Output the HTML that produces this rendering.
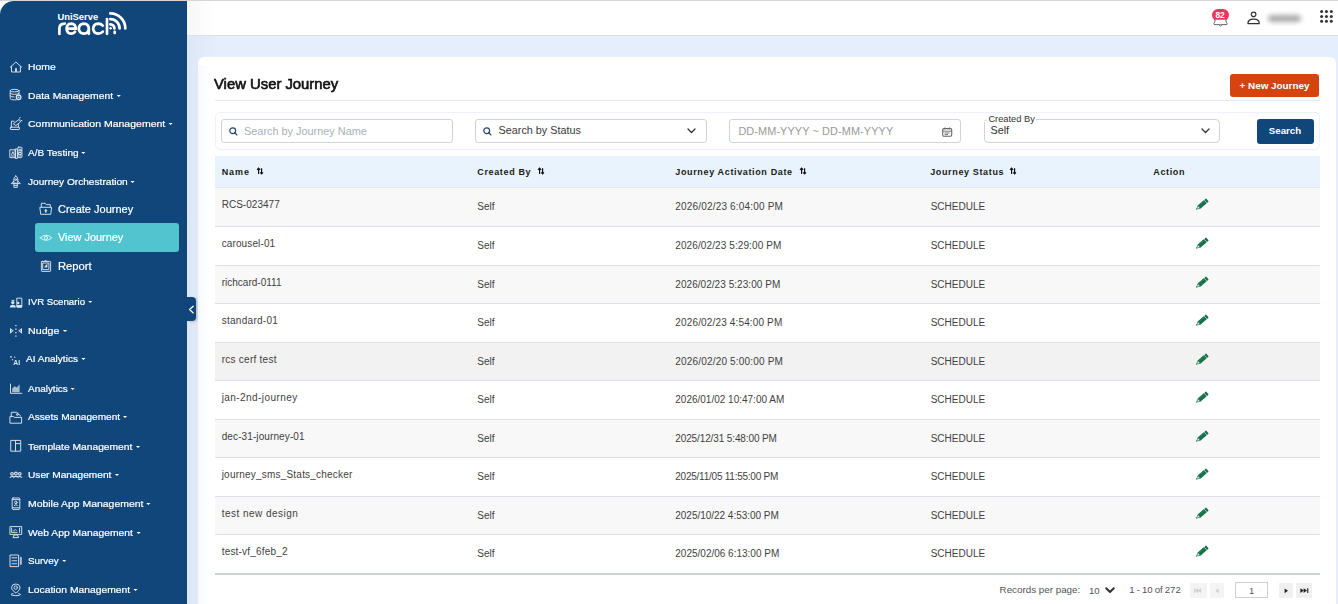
<!DOCTYPE html>
<html><head><meta charset="utf-8">
<style>
*{box-sizing:border-box;margin:0;padding:0}
html,body{width:1338px;height:604px;overflow:hidden;background:#fff;font-family:"Liberation Sans",sans-serif}
.t{position:absolute;white-space:nowrap}
svg.t{overflow:visible}
.cr{display:inline-block;width:0;height:0;border-left:2px solid transparent;border-right:2px solid transparent;border-top:2px solid #fff;margin-left:3px;vertical-align:2px}
</style></head><body>
<div class="t" style="left:0px;top:0px;width:1338px;height:604px;background:#fff;"></div>
<div class="t" style="left:187px;top:36px;width:1151px;height:568px;background:#e4eefc;"></div>
<div class="t" style="left:187px;top:35px;width:1151px;height:1px;background:#dcdfe4;"></div>
<div class="t" style="left:0px;top:0px;width:1338px;height:1px;background:#d6d6d6;"></div>
<div class="t" style="left:187px;top:1px;width:26px;height:34px;background:linear-gradient(90deg,rgba(0,0,0,0.035),rgba(0,0,0,0));"></div>
<div class="t" style="left:187px;top:36px;width:28px;height:568px;background:linear-gradient(90deg,rgba(0,0,40,0.03),rgba(0,0,0,0));"></div>
<div class="t" style="left:0px;top:1px;width:187px;height:603px;background:#11467b;border-top-left-radius:14px"></div>
<div class="t" style="left:57.5px;top:12.04px;font-size:9.4px;line-height:9.4px;font-weight:700;color:#fff;">UniServe</div>
<svg class="t" style="left:0px;top:0px;" width="187" height="40" viewBox="0 0 187 40"><g stroke="#fff" stroke-width="2.7" fill="none" stroke-linecap="round">
<path d="M59.4 34 V28.5 Q59.4 23.6 64.8 23.6"/>
<path d="M75 31.8 Q73.4 33.6 71 33.6 Q66.8 33.4 66.6 28.6 Q66.8 23.8 71.2 23.6 Q75.6 23.8 75.8 28.6 H67"/>
<path d="M88.8 28.6 Q88.6 23.8 84 23.6 Q79 23.8 78.8 28.6 Q79 33.4 84 33.6 Q88.6 33.4 88.8 28.6 V33.8"/>
<path d="M102.8 25.6 Q101 23.6 98.2 23.6 Q93.4 23.8 93.2 28.6 Q93.4 33.4 98.2 33.6 Q101 33.6 102.8 31.6"/>
<path d="M107 19 V33.8"/>
<path d="M110.3 24.3 A4.1 4.1 0 0 1 114.4 28.4"/>
<path d="M110.3 19.1 A9.3 9.3 0 0 1 119.6 28.4"/>
<path d="M110.3 13.4 A15 15 0 0 1 125.3 28.4"/>
</g>
<rect x="113.4" y="30.6" width="2.6" height="3.6" rx="1" fill="#fff"/>
<circle cx="110.6" cy="28.2" r="1.2" fill="#fff"/></svg>
<div class="t" style="left:35px;top:223px;width:144px;height:29px;background:#52c4d0;border-radius:3px"></div>
<svg class="t" style="left:6px;top:56px;opacity:0.85" width="20" height="20" viewBox="0 0 20 20"><g stroke="#fff" fill="none" stroke-width="0.95" stroke-linecap="round" stroke-linejoin="round"><path d="M4.3 11.2 L9.9 6 L15.7 11.2"/><path d="M5.5 10.5 V16 H14.4 V10.5"/></g><rect x="9.1" y="12.2" width="1.8" height="3.6" fill="#fff"/></svg>
<div class="t" style="left:27.8px;top:61.70px;font-size:9.8px;line-height:9.8px;font-weight:400;color:#fff;transform:scaleX(1.0577);transform-origin:0 0;-webkit-text-stroke:0.2px #fff">Home</div>
<svg class="t" style="left:6px;top:86px;opacity:0.85" width="20" height="20" viewBox="0 0 20 20"><g stroke="#fff" fill="none" stroke-width="0.95" stroke-linecap="round" stroke-linejoin="round"><ellipse cx="8.6" cy="4.6" rx="4.4" ry="1.3"/><path d="M4.2 4.6 V12.6 Q4.2 13.9 8.6 13.9 L10 13.9"/><path d="M13 4.6 V8"/><path d="M4.2 7.2 Q4.2 8.4 8.6 8.4 Q13 8.4 13 7.2"/><path d="M4.2 9.9 Q4.2 11 8 11"/></g><circle cx="12.6" cy="11.3" r="2.3" fill="none" stroke="#fff" stroke-width="1.3"/><circle cx="12.6" cy="11.3" r="0.9" fill="#fff"/></svg>
<div class="t" style="left:27.8px;top:90.50px;font-size:9.8px;line-height:9.8px;font-weight:400;color:#fff;transform:scaleX(1.0556);transform-origin:0 0;-webkit-text-stroke:0.2px #fff">Data Management<span class="cr"></span></div>
<svg class="t" style="left:6px;top:114px;opacity:0.85" width="20" height="20" viewBox="0 0 20 20"><g stroke="#fff" fill="none" stroke-width="0.95" stroke-linecap="round" stroke-linejoin="round"><path d="M5.4 13 V7.2 H8"/><rect x="4.3" y="13.2" width="9.2" height="2.3" rx="0.6"/><path d="M7.6 9.5 L13.2 5.4 L14.6 7.8 L10.2 11.4 Z"/><path d="M13.4 4 L14.2 3.6 M15 6.2 L16 6.8"/><path d="M12.4 10 V13"/></g></svg>
<div class="t" style="left:27.8px;top:118.60px;font-size:9.8px;line-height:9.8px;font-weight:400;color:#fff;transform:scaleX(1.0727);transform-origin:0 0;-webkit-text-stroke:0.2px #fff">Communication Management<span class="cr"></span></div>
<svg class="t" style="left:6px;top:142px;opacity:0.85" width="20" height="20" viewBox="0 0 20 20"><g stroke="#fff" fill="none" stroke-width="0.95" stroke-linecap="round" stroke-linejoin="round" stroke-width="0.85"><rect x="4.2" y="7.8" width="5.3" height="7.8"/><rect x="9.5" y="7" width="1.9" height="9.4"/><rect x="11.9" y="5.2" width="4" height="10.4" rx="0.6"/><path d="M5.6 12.6 L6.9 9.6 L8.2 12.6 M5.4 14 H8.4 M12.9 14 H15 M13.9 7.2 L12.9 9 H15 Z M13 10.5 H15 V12.6 H13 Z"/></g></svg>
<div class="t" style="left:27.8px;top:147.80px;font-size:9.8px;line-height:9.8px;font-weight:400;color:#fff;transform:scaleX(1.0240);transform-origin:0 0;-webkit-text-stroke:0.2px #fff">A/B Testing<span class="cr"></span></div>
<svg class="t" style="left:6px;top:171px;opacity:0.85" width="20" height="20" viewBox="0 0 20 20"><g stroke="#fff" fill="none" stroke-width="0.95" stroke-linecap="round" stroke-linejoin="round" stroke-width="0.9"><path d="M9.8 5 Q11.8 6 11.8 8.4 V12.2 H7.8 V8.4 Q7.8 6 9.8 5 Z"/><ellipse cx="9.8" cy="8.6" rx="1" ry="0.8"/><path d="M7.8 10 L5.3 12.6 H7.8 M11.8 10 L14.3 12.6 H11.8"/><rect x="8.3" y="12.6" width="3" height="3.8"/><path d="M8.4 14.4 H11.2"/></g></svg>
<div class="t" style="left:27.8px;top:176.60px;font-size:9.8px;line-height:9.8px;font-weight:400;color:#fff;transform:scaleX(1.0351);transform-origin:0 0;-webkit-text-stroke:0.2px #fff">Journey Orchestration<span class="cr"></span></div>
<svg class="t" style="left:36px;top:199px;opacity:0.85" width="20" height="20" viewBox="0 0 20 20"><g stroke="#fff" fill="none" stroke-width="0.95" stroke-linecap="round" stroke-linejoin="round"><path d="M5.3 8 V4.3 H9.3 L10.3 5.6 H14.3 V7.8"/><path d="M4.2 8.3 H15.6 L14.8 15.3 H5.1 Z"/></g><path d="M9.8 10 L11.6 11.6 H10.6 V13.4 H9 V11.6 H8 Z" fill="#fff"/></svg>
<div class="t" style="left:57.7px;top:203.56px;font-size:10.8px;line-height:10.8px;font-weight:400;color:#fff;transform:scaleX(1.0178);transform-origin:0 0;-webkit-text-stroke:0.2px #fff">Create Journey</div>
<svg class="t" style="left:36px;top:227px;opacity:0.85" width="20" height="20" viewBox="0 0 20 20"><g stroke="#fff" fill="none" stroke-width="0.95" stroke-linecap="round" stroke-linejoin="round" stroke-width="1.2"><path d="M4.2 10.8 Q9.9 5.6 15.8 10.8 Q9.9 16 4.2 10.8 Z"/><circle cx="9.9" cy="10.8" r="1.6"/></g></svg>
<div class="t" style="left:57.7px;top:232.06px;font-size:10.8px;line-height:10.8px;font-weight:400;color:#fff;transform:scaleX(1.0092);transform-origin:0 0;-webkit-text-stroke:0.2px #fff">View Journey</div>
<svg class="t" style="left:36px;top:256px;opacity:0.85" width="20" height="20" viewBox="0 0 20 20"><g stroke="#fff" fill="none" stroke-width="0.95" stroke-linecap="round" stroke-linejoin="round"><rect x="5.4" y="5.4" width="9.2" height="10" rx="0.6"/><path d="M8.3 5.2 Q9.7 3.9 11.2 5.2"/><rect x="7.1" y="7" width="5.8" height="6.6"/></g><path d="M8 11.2 L11.4 7.6 V11.4 Z" fill="#fff"/></svg>
<div class="t" style="left:57.7px;top:260.86px;font-size:10.8px;line-height:10.8px;font-weight:400;color:#fff;transform:scaleX(1.0406);transform-origin:0 0;-webkit-text-stroke:0.2px #fff">Report</div>
<svg class="t" style="left:6px;top:291px;opacity:0.85" width="20" height="20" viewBox="0 0 20 20"><g fill="#fff"><circle cx="6.8" cy="11.6" r="1.6"/><path d="M3.9 16.6 Q3.9 13.8 6.8 13.8 Q9.8 13.8 9.8 16.6 Z"/><circle cx="12.2" cy="12" r="1.2"/><path d="M11 16.4 V14 H15.9 V16.4 Z"/></g><g stroke="#fff" fill="none" stroke-width="0.95" stroke-linecap="round" stroke-linejoin="round"><rect x="11.2" y="7.2" width="4.6" height="9"/><path d="M6 9.4 H8"/></g></svg>
<div class="t" style="left:27.8px;top:296.70px;font-size:9.8px;line-height:9.8px;font-weight:400;color:#fff;transform:scaleX(0.9877);transform-origin:0 0;-webkit-text-stroke:0.2px #fff">IVR Scenario<span class="cr"></span></div>
<svg class="t" style="left:6px;top:320px;opacity:0.85" width="20" height="20" viewBox="0 0 20 20"><g fill="#fff"><path d="M4 8 L7.8 10.8 L4 13.8 Z"/><path d="M16 8 L12.2 10.8 L16 13.8 Z"/><rect x="9.2" y="5" width="1.4" height="1.2"/><rect x="9.2" y="8.5" width="1.4" height="1.2"/><rect x="9.2" y="12" width="1.4" height="1.2"/><rect x="9.2" y="15.5" width="1.4" height="1.2"/></g><g fill="#12467b"><path d="M5.2 10.2 L6.6 10.8 L5.2 11.6 Z"/><path d="M14.8 10.2 L13.4 10.8 L14.8 11.6 Z"/></g></svg>
<div class="t" style="left:27.8px;top:326.40px;font-size:9.8px;line-height:9.8px;font-weight:400;color:#fff;transform:scaleX(1.0893);transform-origin:0 0;-webkit-text-stroke:0.2px #fff">Nudge<span class="cr"></span></div>
<svg class="t" style="left:6px;top:349px;opacity:0.85" width="20" height="20" viewBox="0 0 20 20"><g fill="#fff"><circle cx="5" cy="7.8" r="0.9"/><circle cx="6.5" cy="10.8" r="0.7"/><path d="M8.4 6.8 L9.6 9 L8.4 9 Z"/><text x="7.3" y="15.7" font-family="Liberation Sans" font-weight="700" font-size="6.8">AI</text></g></svg>
<div class="t" style="left:26.099999999999998px;top:354.40px;font-size:9.8px;line-height:9.8px;font-weight:400;color:#fff;transform:scaleX(1.0255);transform-origin:0 0;-webkit-text-stroke:0.2px #fff">AI Analytics<span class="cr"></span></div>
<svg class="t" style="left:6px;top:378px;opacity:0.85" width="20" height="20" viewBox="0 0 20 20"><g stroke="#fff" fill="none" stroke-width="0.95" stroke-linecap="round" stroke-linejoin="round"><path d="M4.5 6 V15.3 H15.8"/></g><path d="M6.2 10.6 L8.6 8.3 L11 9.6 L13.6 6.3 V14.3 H6.2 Z" fill="#fff" fill-opacity="0.75"/></svg>
<div class="t" style="left:27.8px;top:383.60px;font-size:9.8px;line-height:9.8px;font-weight:400;color:#fff;transform:scaleX(1.0150);transform-origin:0 0;-webkit-text-stroke:0.2px #fff">Analytics<span class="cr"></span></div>
<svg class="t" style="left:6px;top:407px;opacity:0.85" width="20" height="20" viewBox="0 0 20 20"><g stroke="#fff" fill="none" stroke-width="0.95" stroke-linecap="round" stroke-linejoin="round" stroke-width="1.15"><path d="M5.3 9.2 V5.3 H10.8 L14.6 9"/><path d="M4.3 9.6 H7.4 L8.6 10.4 H15.6 V16.2 H4.3 Z"/><circle cx="11.4" cy="7.5" r="0.9"/></g></svg>
<div class="t" style="left:27.8px;top:412.40px;font-size:9.8px;line-height:9.8px;font-weight:400;color:#fff;transform:scaleX(1.0322);transform-origin:0 0;-webkit-text-stroke:0.2px #fff">Assets Management<span class="cr"></span></div>
<svg class="t" style="left:6px;top:436px;opacity:0.85" width="20" height="20" viewBox="0 0 20 20"><g stroke="#fff" fill="none" stroke-width="0.95" stroke-linecap="round" stroke-linejoin="round"><rect x="5.1" y="4.4" width="9.6" height="10.8"/><path d="M9.5 4.6 V15 M9.6 7.6 H14.4"/></g></svg>
<div class="t" style="left:27.8px;top:441.70px;font-size:9.8px;line-height:9.8px;font-weight:400;color:#fff;transform:scaleX(1.0475);transform-origin:0 0;-webkit-text-stroke:0.2px #fff">Template Management<span class="cr"></span></div>
<svg class="t" style="left:6px;top:464px;opacity:0.85" width="20" height="20" viewBox="0 0 20 20"><g fill="none" stroke="#fff" stroke-width="1.1"><circle cx="6" cy="9.8" r="1.3"/><circle cx="9.9" cy="9.5" r="1.4"/><circle cx="13.8" cy="9.8" r="1.3"/><path d="M3.8 13.6 Q6 11.6 8 13.2 M7.2 13.6 Q9.9 11 12.6 13.6 M11.8 13.2 Q13.8 11.6 16 13.6"/></g></svg>
<div class="t" style="left:27.8px;top:469.50px;font-size:9.8px;line-height:9.8px;font-weight:400;color:#fff;transform:scaleX(1.0346);transform-origin:0 0;-webkit-text-stroke:0.2px #fff">User Management<span class="cr"></span></div>
<svg class="t" style="left:6px;top:493px;opacity:0.85" width="20" height="20" viewBox="0 0 20 20"><g stroke="#fff" fill="none" stroke-width="0.95" stroke-linecap="round" stroke-linejoin="round"><rect x="6.2" y="5" width="7.6" height="11.4" rx="0.8"/><path d="M6.4 14.8 H13.6 M6.4 6.6 H13.6"/><circle cx="9.9" cy="9.4" r="1.3"/><path d="M8.3 12.4 Q9.9 10.6 11.5 12.4"/></g></svg>
<div class="t" style="left:27.8px;top:498.80px;font-size:9.8px;line-height:9.8px;font-weight:400;color:#fff;transform:scaleX(1.0648);transform-origin:0 0;-webkit-text-stroke:0.2px #fff">Mobile App Management<span class="cr"></span></div>
<svg class="t" style="left:6px;top:522px;opacity:0.85" width="20" height="20" viewBox="0 0 20 20"><g stroke="#fff" fill="none" stroke-width="0.95" stroke-linecap="round" stroke-linejoin="round"><rect x="4.3" y="4.6" width="11.4" height="7.8"/><path d="M5.6 6.2 V10.4 H11 M13.6 6.2 V10.4 M7.4 15.6 H12.6 L11.6 13 H8.4 Z"/></g><path d="M7.2 9 L9.6 7.6 L10.6 8.6" stroke="#fff" fill="none" stroke-width="0.9"/></svg>
<div class="t" style="left:27.8px;top:527.60px;font-size:9.8px;line-height:9.8px;font-weight:400;color:#fff;transform:scaleX(1.0540);transform-origin:0 0;-webkit-text-stroke:0.2px #fff">Web App Management<span class="cr"></span></div>
<svg class="t" style="left:6px;top:550px;opacity:0.85" width="20" height="20" viewBox="0 0 20 20"><g stroke="#fff" fill="none" stroke-width="0.95" stroke-linecap="round" stroke-linejoin="round"><rect x="4.4" y="5" width="8.2" height="11.6"/><path d="M6 7.8 H10.8 M6 10.8 H10.8 M6 13.8 H10.8"/></g><rect x="13.9" y="6.8" width="1.9" height="8.2" rx="0.9" fill="#fff" fill-opacity="0.8"/></svg>
<div class="t" style="left:27.8px;top:555.70px;font-size:9.8px;line-height:9.8px;font-weight:400;color:#fff;transform:scaleX(1.0067);transform-origin:0 0;-webkit-text-stroke:0.2px #fff">Survey<span class="cr"></span></div>
<svg class="t" style="left:6px;top:579px;opacity:0.85" width="20" height="20" viewBox="0 0 20 20"><g stroke="#fff" fill="none" stroke-width="0.95" stroke-linecap="round" stroke-linejoin="round"><path d="M9.8 14 L7 11.6 Q5.4 10 5.6 8.1 Q6 5 9.8 5 Q13.6 5 14 8.1 Q14.2 10 12.6 11.6 Z"/><circle cx="9.8" cy="8.6" r="1.7"/><path d="M7 14.6 Q5 15 5 15.6 Q5 16.6 9.8 16.6 Q14.6 16.6 14.6 15.6 Q14.6 15 12.6 14.6"/></g></svg>
<div class="t" style="left:27.8px;top:584.70px;font-size:9.8px;line-height:9.8px;font-weight:400;color:#fff;transform:scaleX(1.0536);transform-origin:0 0;-webkit-text-stroke:0.2px #fff">Location Management<span class="cr"></span></div>
<div id="carets"></div>
<div class="t" style="left:187px;top:297px;width:9px;height:24px;background:#11467b;border-radius:0 4px 4px 0;box-shadow:2px 1px 3px rgba(0,0,0,0.18)"></div>
<svg class="t" style="left:187px;top:297px;" width="9" height="24" viewBox="0 0 9 24"><path d="M6.2 9.3 L2.6 12.6 L6.2 15.9" stroke="#fff" stroke-width="1.3" fill="none" stroke-linecap="round" stroke-linejoin="round"/></svg>
<div class="t" style="left:1212px;top:9px;width:17px;height:12px;background:#f0355c;border-radius:6px"></div>
<div class="t" style="left:1215.6px;top:11.49px;font-size:8.4px;line-height:8.4px;font-weight:700;color:#fff;letter-spacing:-0.3px">82</div>
<svg class="t" style="left:1212px;top:19px;" width="17" height="9" viewBox="0 0 17 9"><path d="M3.2 0.8 Q3 3.6 1.8 4.6 Q1.6 5.6 3 5.6 H14 Q15.4 5.6 15.2 4.6 Q14 3.6 13.8 0.8" fill="#fff" stroke="#444" stroke-width="0.8"/><path d="M6.8 5.8 Q8.5 8.4 10.2 5.8" fill="#fff" stroke="#444" stroke-width="0.8"/></svg>
<svg class="t" style="left:1246.5px;top:10.5px;" width="14" height="14" viewBox="0 0 14 14"><circle cx="6.6" cy="3.4" r="2.3" fill="none" stroke="#333" stroke-width="1.2"/><path d="M0.9 12.6 Q0.9 8.2 6.6 8.2 Q12.3 8.2 12.3 12.6 Z" fill="none" stroke="#333" stroke-width="1.2" stroke-linejoin="round"/></svg>
<div class="t" style="left:1268px;top:15px;width:33px;height:7px;background:#9a9a9a;border-radius:4px;filter:blur(2.6px);opacity:0.85"></div>
<svg class="t" style="left:1320px;top:10px;" width="14" height="14" viewBox="0 0 14 14"><circle cx="1.60" cy="1.60" r="1.5" fill="#333"/><circle cx="1.60" cy="6.45" r="1.5" fill="#333"/><circle cx="1.60" cy="11.30" r="1.5" fill="#333"/><circle cx="6.45" cy="1.60" r="1.5" fill="#333"/><circle cx="6.45" cy="6.45" r="1.5" fill="#333"/><circle cx="6.45" cy="11.30" r="1.5" fill="#333"/><circle cx="11.30" cy="1.60" r="1.5" fill="#333"/><circle cx="11.30" cy="6.45" r="1.5" fill="#333"/><circle cx="11.30" cy="11.30" r="1.5" fill="#333"/></svg>
<div class="t" style="left:198px;top:57px;width:1138px;height:560px;background:#fff;border-radius:6px"></div>
<div class="t" style="left:198px;top:65px;width:12px;height:539px;background:linear-gradient(90deg,#f7f8fa,#fff);"></div>
<div class="t" style="left:214.3px;top:78.12px;font-size:13.8px;line-height:13.8px;font-weight:400;color:#111;-webkit-text-stroke:0.6px #111;transform:scaleX(1.075);transform-origin:0 0">View User Journey</div>
<div class="t" style="left:215px;top:100px;width:1105px;height:1px;background:#e8e8e8;"></div>
<div class="t" style="left:1230px;top:74px;width:89px;height:23px;background:#d4440f;border-radius:3px"></div>
<div class="t" style="left:1239.5px;top:80.92px;font-size:9.9px;line-height:9.9px;font-weight:700;color:#fff;">+ New Journey</div>
<div class="t" style="left:215px;top:112px;width:1105px;height:38px;background:#fff;border:1px solid #eef2f8;border-radius:5px"></div>
<div class="t" style="left:221px;top:119px;width:232px;height:24px;background:#fff;border:1px solid #cfd4dc;border-radius:3px"></div>
<svg class="t" style="left:229px;top:127px;" width="9" height="9" viewBox="0 0 9 9"><circle cx="3.7" cy="3.7" r="2.9" fill="none" stroke="#24426e" stroke-width="1.15"/><path d="M5.8 5.8 L7.9 7.9" stroke="#24426e" stroke-width="1.3" stroke-linecap="round"/></svg>
<div class="t" style="left:244px;top:125.97px;font-size:10.9px;line-height:10.9px;font-weight:400;color:#a9b0ba;">Search by Journey Name</div>
<div class="t" style="left:475px;top:119px;width:232px;height:24px;background:#fff;border:1px solid #cfd4dc;border-radius:3px"></div>
<svg class="t" style="left:483px;top:127px;" width="9" height="9" viewBox="0 0 9 9"><circle cx="3.7" cy="3.7" r="2.9" fill="none" stroke="#24426e" stroke-width="1.15"/><path d="M5.8 5.8 L7.9 7.9" stroke="#24426e" stroke-width="1.3" stroke-linecap="round"/></svg>
<div class="t" style="left:498.6px;top:125.16px;font-size:10.8px;line-height:10.8px;font-weight:400;color:#3a3a3a;">Search by Status</div>
<svg class="t" style="left:687px;top:128px;" width="9" height="6" viewBox="0 0 9 6"><path d="M1 1 L4.5 4.5 L8 1" fill="none" stroke="#333" stroke-width="1.3" stroke-linecap="round" stroke-linejoin="round"/></svg>
<div class="t" style="left:729px;top:119px;width:232px;height:24px;background:#fff;border:1px solid #cfd4dc;border-radius:3px"></div>
<div class="t" style="left:738.4px;top:125.97px;font-size:10.9px;line-height:10.9px;font-weight:400;color:#9a9a9a;letter-spacing:0.1px">DD-MM-YYYY ~ DD-MM-YYYY</div>
<svg class="t" style="left:942px;top:127px;" width="11" height="10" viewBox="0 0 11 10"><rect x="0.7" y="1.6" width="9" height="7.6" rx="1.2" fill="none" stroke="#666" stroke-width="1.1"/><path d="M0.8 4.2 H9.6 M3 0.4 V2.4 M7.4 0.4 V2.4 M2.6 6 H7.6 M2.6 7.6 H6" stroke="#666" stroke-width="0.9"/></svg>
<div class="t" style="left:984px;top:119px;width:236px;height:24px;background:#fff;border:1px solid #cfd4dc;border-radius:4px"></div>
<div class="t" style="left:987px;top:116px;width:49px;height:5px;background:#fff;"></div>
<div class="t" style="left:988.4px;top:114.73px;font-size:9.3px;line-height:9.3px;font-weight:400;color:#333;">Created By</div>
<div class="t" style="left:990.5px;top:125.06px;font-size:10.8px;line-height:10.8px;font-weight:400;color:#333;">Self</div>
<svg class="t" style="left:1201px;top:128px;" width="9" height="6" viewBox="0 0 9 6"><path d="M1 1 L4.5 4.5 L8 1" fill="none" stroke="#333" stroke-width="1.3" stroke-linecap="round" stroke-linejoin="round"/></svg>
<div class="t" style="left:1257px;top:119px;width:57px;height:25px;background:#11467b;border-radius:3px"></div>
<div class="t" style="left:1268.8px;top:126.49px;font-size:9.7px;line-height:9.7px;font-weight:700;color:#fff;">Search</div>
<div class="t" style="left:215px;top:156px;width:1105px;height:32px;background:#e8f3fd;"></div>
<div class="t" style="left:221.7px;top:167.68px;font-size:9px;line-height:9px;font-weight:700;color:#1a1a1a;letter-spacing:0.9px">Name</div>
<svg class="t" style="left:257px;top:168px;" width="6" height="6" viewBox="0 0 6 6"><path d="M1.6 0.4 V6 M0 1.8 L1.6 0.2 L3.2 1.8" stroke="#111" stroke-width="1.2" fill="none"/><path d="M4.6 0.2 V5.8 M3.2 4.4 L4.6 5.8 L6 4.4" stroke="#111" stroke-width="1.2" fill="none"/></svg>
<div class="t" style="left:477.3px;top:167.68px;font-size:9px;line-height:9px;font-weight:700;color:#1a1a1a;letter-spacing:0.64px">Created By</div>
<svg class="t" style="left:537.8px;top:168px;" width="6" height="6" viewBox="0 0 6 6"><path d="M1.6 0.4 V6 M0 1.8 L1.6 0.2 L3.2 1.8" stroke="#111" stroke-width="1.2" fill="none"/><path d="M4.6 0.2 V5.8 M3.2 4.4 L4.6 5.8 L6 4.4" stroke="#111" stroke-width="1.2" fill="none"/></svg>
<div class="t" style="left:675.3px;top:167.68px;font-size:9px;line-height:9px;font-weight:700;color:#1a1a1a;letter-spacing:0.64px">Journey Activation Date</div>
<svg class="t" style="left:800.4px;top:168px;" width="6" height="6" viewBox="0 0 6 6"><path d="M1.6 0.4 V6 M0 1.8 L1.6 0.2 L3.2 1.8" stroke="#111" stroke-width="1.2" fill="none"/><path d="M4.6 0.2 V5.8 M3.2 4.4 L4.6 5.8 L6 4.4" stroke="#111" stroke-width="1.2" fill="none"/></svg>
<div class="t" style="left:930.2px;top:167.68px;font-size:9px;line-height:9px;font-weight:700;color:#1a1a1a;letter-spacing:0.64px">Journey Status</div>
<svg class="t" style="left:1010px;top:168px;" width="6" height="6" viewBox="0 0 6 6"><path d="M1.6 0.4 V6 M0 1.8 L1.6 0.2 L3.2 1.8" stroke="#111" stroke-width="1.2" fill="none"/><path d="M4.6 0.2 V5.8 M3.2 4.4 L4.6 5.8 L6 4.4" stroke="#111" stroke-width="1.2" fill="none"/></svg>
<div class="t" style="left:1153.3px;top:167.68px;font-size:9px;line-height:9px;font-weight:700;color:#1a1a1a;letter-spacing:0.64px">Action</div>
<div class="t" style="left:215px;top:187px;width:1105px;height:1px;background:#e3e8ee;"></div>
<div class="t" style="left:215px;top:188px;width:1105px;height:38px;background:#f8f8f8;"></div>
<div class="t" style="left:215px;top:226px;width:1105px;height:1px;background:#dde1e7;"></div>
<div class="t" style="left:221.7px;top:200.23px;font-size:10px;line-height:10px;font-weight:400;color:#3f3f3f;letter-spacing:0.022px">RCS-023477</div>
<div class="t" style="left:477.3px;top:201.84px;font-size:10px;line-height:10px;font-weight:400;color:#3f3f3f;">Self</div>
<div class="t" style="left:675.3px;top:201.84px;font-size:10px;line-height:10px;font-weight:400;color:#3f3f3f;letter-spacing:0.180px">2026/02/23 6:04:00 PM</div>
<div class="t" style="left:930.7px;top:201.84px;font-size:10px;line-height:10px;font-weight:400;color:#3f3f3f;">SCHEDULE</div>
<svg class="t" style="left:1192.85px;top:196.45px;" width="17.5" height="17.5" viewBox="0 0 17.5 17.5"><g transform="rotate(50 8.75 8.75) translate(8.75 8.75) scale(0.86) translate(-8.75 -8.75)"><rect x="6.3" y="0.1" width="4.9" height="2.6" rx="0.9" fill="#17704a"/><rect x="6.3" y="3.3" width="4.9" height="9.6" fill="#17704a"/><path d="M6.3 12.9 H11.2 L8.75 17.4 Z" fill="#17704a"/><path d="M7.2 13.3 H10.3 L8.75 15.9 Z" fill="#e9f3ee"/><path d="M8.2 16 H9.3 L8.75 17.2 Z" fill="#0d3b27"/><path d="M7.9 3.6 V12.6" stroke="#2f9a68" stroke-width="0.5"/></g></svg>
<div class="t" style="left:215px;top:227px;width:1105px;height:38px;background:#fff;"></div>
<div class="t" style="left:215px;top:265px;width:1105px;height:1px;background:#dde1e7;"></div>
<div class="t" style="left:221.7px;top:239.23px;font-size:10px;line-height:10px;font-weight:400;color:#3f3f3f;letter-spacing:0.120px">carousel-01</div>
<div class="t" style="left:477.3px;top:240.84px;font-size:10px;line-height:10px;font-weight:400;color:#3f3f3f;">Self</div>
<div class="t" style="left:675.3px;top:240.84px;font-size:10px;line-height:10px;font-weight:400;color:#3f3f3f;letter-spacing:0.100px">2026/02/23 5:29:00 PM</div>
<div class="t" style="left:930.7px;top:240.84px;font-size:10px;line-height:10px;font-weight:400;color:#3f3f3f;">SCHEDULE</div>
<svg class="t" style="left:1192.85px;top:235.45px;" width="17.5" height="17.5" viewBox="0 0 17.5 17.5"><g transform="rotate(50 8.75 8.75) translate(8.75 8.75) scale(0.86) translate(-8.75 -8.75)"><rect x="6.3" y="0.1" width="4.9" height="2.6" rx="0.9" fill="#17704a"/><rect x="6.3" y="3.3" width="4.9" height="9.6" fill="#17704a"/><path d="M6.3 12.9 H11.2 L8.75 17.4 Z" fill="#17704a"/><path d="M7.2 13.3 H10.3 L8.75 15.9 Z" fill="#e9f3ee"/><path d="M8.2 16 H9.3 L8.75 17.2 Z" fill="#0d3b27"/><path d="M7.9 3.6 V12.6" stroke="#2f9a68" stroke-width="0.5"/></g></svg>
<div class="t" style="left:215px;top:266px;width:1105px;height:37px;background:#f8f8f8;"></div>
<div class="t" style="left:215px;top:303px;width:1105px;height:1px;background:#dde1e7;"></div>
<div class="t" style="left:221.7px;top:278.24px;font-size:10px;line-height:10px;font-weight:400;color:#3f3f3f;letter-spacing:0.008px">richcard-0111</div>
<div class="t" style="left:477.3px;top:279.84px;font-size:10px;line-height:10px;font-weight:400;color:#3f3f3f;">Self</div>
<div class="t" style="left:675.3px;top:279.84px;font-size:10px;line-height:10px;font-weight:400;color:#3f3f3f;letter-spacing:0.050px">2026/02/23 5:23:00 PM</div>
<div class="t" style="left:930.7px;top:279.84px;font-size:10px;line-height:10px;font-weight:400;color:#3f3f3f;">SCHEDULE</div>
<svg class="t" style="left:1192.85px;top:274.45px;" width="17.5" height="17.5" viewBox="0 0 17.5 17.5"><g transform="rotate(50 8.75 8.75) translate(8.75 8.75) scale(0.86) translate(-8.75 -8.75)"><rect x="6.3" y="0.1" width="4.9" height="2.6" rx="0.9" fill="#17704a"/><rect x="6.3" y="3.3" width="4.9" height="9.6" fill="#17704a"/><path d="M6.3 12.9 H11.2 L8.75 17.4 Z" fill="#17704a"/><path d="M7.2 13.3 H10.3 L8.75 15.9 Z" fill="#e9f3ee"/><path d="M8.2 16 H9.3 L8.75 17.2 Z" fill="#0d3b27"/><path d="M7.9 3.6 V12.6" stroke="#2f9a68" stroke-width="0.5"/></g></svg>
<div class="t" style="left:215px;top:304px;width:1105px;height:38px;background:#fff;"></div>
<div class="t" style="left:215px;top:342px;width:1105px;height:1px;background:#dde1e7;"></div>
<div class="t" style="left:221.7px;top:316.24px;font-size:10px;line-height:10px;font-weight:400;color:#3f3f3f;letter-spacing:0.280px">standard-01</div>
<div class="t" style="left:477.3px;top:317.84px;font-size:10px;line-height:10px;font-weight:400;color:#3f3f3f;">Self</div>
<div class="t" style="left:675.3px;top:317.84px;font-size:10px;line-height:10px;font-weight:400;color:#3f3f3f;letter-spacing:0.150px">2026/02/23 4:54:00 PM</div>
<div class="t" style="left:930.7px;top:317.84px;font-size:10px;line-height:10px;font-weight:400;color:#3f3f3f;">SCHEDULE</div>
<svg class="t" style="left:1192.85px;top:312.45px;" width="17.5" height="17.5" viewBox="0 0 17.5 17.5"><g transform="rotate(50 8.75 8.75) translate(8.75 8.75) scale(0.86) translate(-8.75 -8.75)"><rect x="6.3" y="0.1" width="4.9" height="2.6" rx="0.9" fill="#17704a"/><rect x="6.3" y="3.3" width="4.9" height="9.6" fill="#17704a"/><path d="M6.3 12.9 H11.2 L8.75 17.4 Z" fill="#17704a"/><path d="M7.2 13.3 H10.3 L8.75 15.9 Z" fill="#e9f3ee"/><path d="M8.2 16 H9.3 L8.75 17.2 Z" fill="#0d3b27"/><path d="M7.9 3.6 V12.6" stroke="#2f9a68" stroke-width="0.5"/></g></svg>
<div class="t" style="left:215px;top:343px;width:1105px;height:37px;background:#f2f2f2;"></div>
<div class="t" style="left:215px;top:380px;width:1105px;height:1px;background:#dde1e7;"></div>
<div class="t" style="left:221.7px;top:355.24px;font-size:10px;line-height:10px;font-weight:400;color:#3f3f3f;letter-spacing:0.258px">rcs cerf test</div>
<div class="t" style="left:477.3px;top:356.84px;font-size:10px;line-height:10px;font-weight:400;color:#3f3f3f;">Self</div>
<div class="t" style="left:675.3px;top:356.84px;font-size:10px;line-height:10px;font-weight:400;color:#3f3f3f;letter-spacing:0.180px">2026/02/20 5:00:00 PM</div>
<div class="t" style="left:930.7px;top:356.84px;font-size:10px;line-height:10px;font-weight:400;color:#3f3f3f;">SCHEDULE</div>
<svg class="t" style="left:1192.85px;top:351.45px;" width="17.5" height="17.5" viewBox="0 0 17.5 17.5"><g transform="rotate(50 8.75 8.75) translate(8.75 8.75) scale(0.86) translate(-8.75 -8.75)"><rect x="6.3" y="0.1" width="4.9" height="2.6" rx="0.9" fill="#17704a"/><rect x="6.3" y="3.3" width="4.9" height="9.6" fill="#17704a"/><path d="M6.3 12.9 H11.2 L8.75 17.4 Z" fill="#17704a"/><path d="M7.2 13.3 H10.3 L8.75 15.9 Z" fill="#e9f3ee"/><path d="M8.2 16 H9.3 L8.75 17.2 Z" fill="#0d3b27"/><path d="M7.9 3.6 V12.6" stroke="#2f9a68" stroke-width="0.5"/></g></svg>
<div class="t" style="left:215px;top:381px;width:1105px;height:38px;background:#fff;"></div>
<div class="t" style="left:215px;top:419px;width:1105px;height:1px;background:#dde1e7;"></div>
<div class="t" style="left:221.7px;top:393.24px;font-size:10px;line-height:10px;font-weight:400;color:#3f3f3f;letter-spacing:0.429px">jan-2nd-journey</div>
<div class="t" style="left:477.3px;top:394.84px;font-size:10px;line-height:10px;font-weight:400;color:#3f3f3f;">Self</div>
<div class="t" style="left:675.3px;top:394.84px;font-size:10px;line-height:10px;font-weight:400;color:#3f3f3f;letter-spacing:-0.002px">2026/01/02 10:47:00 AM</div>
<div class="t" style="left:930.7px;top:394.84px;font-size:10px;line-height:10px;font-weight:400;color:#3f3f3f;">SCHEDULE</div>
<svg class="t" style="left:1192.85px;top:389.45px;" width="17.5" height="17.5" viewBox="0 0 17.5 17.5"><g transform="rotate(50 8.75 8.75) translate(8.75 8.75) scale(0.86) translate(-8.75 -8.75)"><rect x="6.3" y="0.1" width="4.9" height="2.6" rx="0.9" fill="#17704a"/><rect x="6.3" y="3.3" width="4.9" height="9.6" fill="#17704a"/><path d="M6.3 12.9 H11.2 L8.75 17.4 Z" fill="#17704a"/><path d="M7.2 13.3 H10.3 L8.75 15.9 Z" fill="#e9f3ee"/><path d="M8.2 16 H9.3 L8.75 17.2 Z" fill="#0d3b27"/><path d="M7.9 3.6 V12.6" stroke="#2f9a68" stroke-width="0.5"/></g></svg>
<div class="t" style="left:215px;top:420px;width:1105px;height:37px;background:#f8f8f8;"></div>
<div class="t" style="left:215px;top:457px;width:1105px;height:1px;background:#dde1e7;"></div>
<div class="t" style="left:221.7px;top:432.24px;font-size:10px;line-height:10px;font-weight:400;color:#3f3f3f;letter-spacing:0.106px">dec-31-journey-01</div>
<div class="t" style="left:477.3px;top:433.84px;font-size:10px;line-height:10px;font-weight:400;color:#3f3f3f;">Self</div>
<div class="t" style="left:675.3px;top:433.84px;font-size:10px;line-height:10px;font-weight:400;color:#3f3f3f;letter-spacing:-0.120px">2025/12/31 5:48:00 PM</div>
<div class="t" style="left:930.7px;top:433.84px;font-size:10px;line-height:10px;font-weight:400;color:#3f3f3f;">SCHEDULE</div>
<svg class="t" style="left:1192.85px;top:428.45px;" width="17.5" height="17.5" viewBox="0 0 17.5 17.5"><g transform="rotate(50 8.75 8.75) translate(8.75 8.75) scale(0.86) translate(-8.75 -8.75)"><rect x="6.3" y="0.1" width="4.9" height="2.6" rx="0.9" fill="#17704a"/><rect x="6.3" y="3.3" width="4.9" height="9.6" fill="#17704a"/><path d="M6.3 12.9 H11.2 L8.75 17.4 Z" fill="#17704a"/><path d="M7.2 13.3 H10.3 L8.75 15.9 Z" fill="#e9f3ee"/><path d="M8.2 16 H9.3 L8.75 17.2 Z" fill="#0d3b27"/><path d="M7.9 3.6 V12.6" stroke="#2f9a68" stroke-width="0.5"/></g></svg>
<div class="t" style="left:215px;top:458px;width:1105px;height:38px;background:#fff;"></div>
<div class="t" style="left:215px;top:496px;width:1105px;height:1px;background:#dde1e7;"></div>
<div class="t" style="left:221.7px;top:470.24px;font-size:10px;line-height:10px;font-weight:400;color:#3f3f3f;letter-spacing:0.212px">journey_sms_Stats_checker</div>
<div class="t" style="left:477.3px;top:471.84px;font-size:10px;line-height:10px;font-weight:400;color:#3f3f3f;">Self</div>
<div class="t" style="left:675.3px;top:471.84px;font-size:10px;line-height:10px;font-weight:400;color:#3f3f3f;letter-spacing:-0.240px">2025/11/05 11:55:00 PM</div>
<div class="t" style="left:930.7px;top:471.84px;font-size:10px;line-height:10px;font-weight:400;color:#3f3f3f;">SCHEDULE</div>
<svg class="t" style="left:1192.85px;top:466.45px;" width="17.5" height="17.5" viewBox="0 0 17.5 17.5"><g transform="rotate(50 8.75 8.75) translate(8.75 8.75) scale(0.86) translate(-8.75 -8.75)"><rect x="6.3" y="0.1" width="4.9" height="2.6" rx="0.9" fill="#17704a"/><rect x="6.3" y="3.3" width="4.9" height="9.6" fill="#17704a"/><path d="M6.3 12.9 H11.2 L8.75 17.4 Z" fill="#17704a"/><path d="M7.2 13.3 H10.3 L8.75 15.9 Z" fill="#e9f3ee"/><path d="M8.2 16 H9.3 L8.75 17.2 Z" fill="#0d3b27"/><path d="M7.9 3.6 V12.6" stroke="#2f9a68" stroke-width="0.5"/></g></svg>
<div class="t" style="left:215px;top:497px;width:1105px;height:37px;background:#f8f8f8;"></div>
<div class="t" style="left:215px;top:534px;width:1105px;height:1px;background:#dde1e7;"></div>
<div class="t" style="left:221.7px;top:509.24px;font-size:10px;line-height:10px;font-weight:400;color:#3f3f3f;letter-spacing:0.479px">test new design</div>
<div class="t" style="left:477.3px;top:510.83px;font-size:10px;line-height:10px;font-weight:400;color:#3f3f3f;">Self</div>
<div class="t" style="left:675.3px;top:510.83px;font-size:10px;line-height:10px;font-weight:400;color:#3f3f3f;letter-spacing:-0.025px">2025/10/22 4:53:00 PM</div>
<div class="t" style="left:930.7px;top:510.83px;font-size:10px;line-height:10px;font-weight:400;color:#3f3f3f;">SCHEDULE</div>
<svg class="t" style="left:1192.85px;top:505.45px;" width="17.5" height="17.5" viewBox="0 0 17.5 17.5"><g transform="rotate(50 8.75 8.75) translate(8.75 8.75) scale(0.86) translate(-8.75 -8.75)"><rect x="6.3" y="0.1" width="4.9" height="2.6" rx="0.9" fill="#17704a"/><rect x="6.3" y="3.3" width="4.9" height="9.6" fill="#17704a"/><path d="M6.3 12.9 H11.2 L8.75 17.4 Z" fill="#17704a"/><path d="M7.2 13.3 H10.3 L8.75 15.9 Z" fill="#e9f3ee"/><path d="M8.2 16 H9.3 L8.75 17.2 Z" fill="#0d3b27"/><path d="M7.9 3.6 V12.6" stroke="#2f9a68" stroke-width="0.5"/></g></svg>
<div class="t" style="left:215px;top:535px;width:1105px;height:38px;background:#fff;"></div>
<div class="t" style="left:215px;top:573px;width:1105px;height:2px;background:#cdd0d5;"></div>
<div class="t" style="left:221.7px;top:547.24px;font-size:10px;line-height:10px;font-weight:400;color:#3f3f3f;letter-spacing:0.185px">test-vf_6feb_2</div>
<div class="t" style="left:477.3px;top:548.83px;font-size:10px;line-height:10px;font-weight:400;color:#3f3f3f;">Self</div>
<div class="t" style="left:675.3px;top:548.83px;font-size:10px;line-height:10px;font-weight:400;color:#3f3f3f;letter-spacing:0.000px">2025/02/06 6:13:00 PM</div>
<div class="t" style="left:930.7px;top:548.83px;font-size:10px;line-height:10px;font-weight:400;color:#3f3f3f;">SCHEDULE</div>
<svg class="t" style="left:1192.85px;top:543.45px;" width="17.5" height="17.5" viewBox="0 0 17.5 17.5"><g transform="rotate(50 8.75 8.75) translate(8.75 8.75) scale(0.86) translate(-8.75 -8.75)"><rect x="6.3" y="0.1" width="4.9" height="2.6" rx="0.9" fill="#17704a"/><rect x="6.3" y="3.3" width="4.9" height="9.6" fill="#17704a"/><path d="M6.3 12.9 H11.2 L8.75 17.4 Z" fill="#17704a"/><path d="M7.2 13.3 H10.3 L8.75 15.9 Z" fill="#e9f3ee"/><path d="M8.2 16 H9.3 L8.75 17.2 Z" fill="#0d3b27"/><path d="M7.9 3.6 V12.6" stroke="#2f9a68" stroke-width="0.5"/></g></svg>
<div class="t" style="left:999.6px;top:584.90px;font-size:9.8px;line-height:9.8px;font-weight:400;color:#555;">Records per page:</div>
<div class="t" style="left:1089px;top:586.07px;font-size:9.6px;line-height:9.6px;font-weight:400;color:#555;">10</div>
<svg class="t" style="left:1105px;top:587px;" width="10" height="7" viewBox="0 0 10 7"><path d="M1.2 1.2 L5 5 L8.8 1.2" fill="none" stroke="#333" stroke-width="2" stroke-linecap="round" stroke-linejoin="round"/></svg>
<div class="t" style="left:1129.3px;top:584.77px;font-size:9.6px;line-height:9.6px;font-weight:400;color:#555;word-spacing:-0.6px">1 - 10 of 272</div>
<div class="t" style="left:1190px;top:583px;width:17px;height:15px;background:#f4f4f4;"></div>
<div class="t" style="left:1210px;top:583px;width:14px;height:15px;background:#f4f4f4;"></div>
<div class="t" style="left:1235px;top:582px;width:33px;height:16px;background:#fff;border:1px solid #d0d0d0"></div>
<div class="t" style="left:1249px;top:586.04px;font-size:9.4px;line-height:9.4px;font-weight:400;color:#555;">1</div>
<div class="t" style="left:1279px;top:583px;width:14px;height:15px;background:#f0f0f0;"></div>
<div class="t" style="left:1296px;top:583px;width:16px;height:15px;background:#f0f0f0;"></div>
<svg class="t" style="left:1190px;top:583px;" width="17" height="15" viewBox="0 0 17 15"><path d="M11 5.2 L7.6 7.6 L11 10.0 Z" fill="#d0d0d0"/><path d="M8 5.2 L4.6 7.6 L8 10.0 Z" fill="#d0d0d0"/><rect x="4" y="5.2" width="1.1" height="4.8" fill="#d0d0d0"/></svg>
<svg class="t" style="left:1210px;top:583px;" width="14" height="15" viewBox="0 0 14 15"><path d="M8.6 5.4 L5.199999999999999 7.800000000000001 L8.6 10.2 Z" fill="#d0d0d0"/></svg>
<svg class="t" style="left:1279px;top:583px;" width="14" height="15" viewBox="0 0 14 15"><path d="M5.6 5.4 L9.0 7.800000000000001 L5.6 10.2 Z" fill="#222"/></svg>
<svg class="t" style="left:1296px;top:583px;" width="16" height="15" viewBox="0 0 16 15"><path d="M4.4 5.2 L7.800000000000001 7.6 L4.4 10.0 Z" fill="#222"/><path d="M7.6 5.2 L11.0 7.6 L7.6 10.0 Z" fill="#222"/><rect x="11.2" y="5.2" width="1.1" height="4.8" fill="#222"/></svg>
</body></html>
